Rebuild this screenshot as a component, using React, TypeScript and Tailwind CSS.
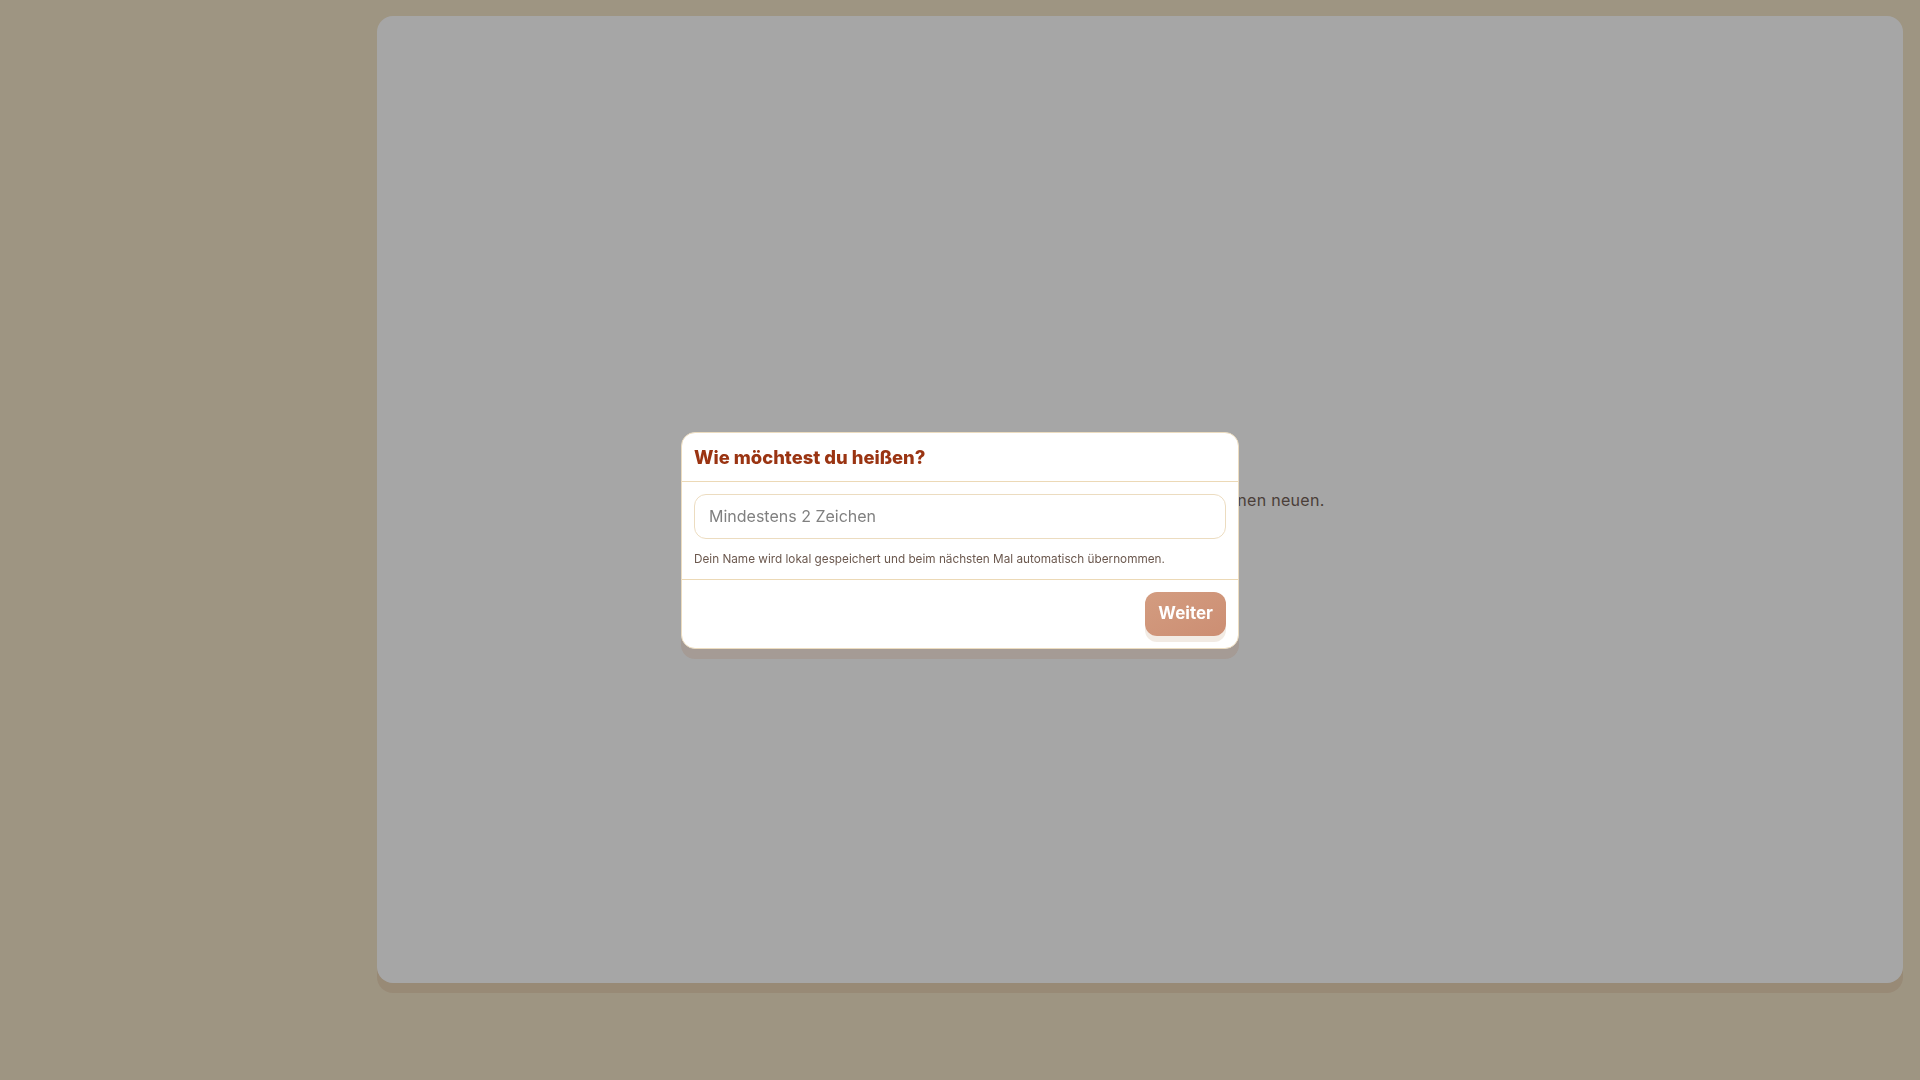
import React from "react";

export default function App() {
  return (
    <div
      className="relative w-full h-[1080px] overflow-hidden bg-[#f3e5c8] flex"
      style={{ fontFamily: "Inter, 'Noto Sans', sans-serif" }}
    >
      <aside className="w-[361px] shrink-0" />
      <main className="flex-1 pt-4 pl-4 pr-[17px]">
        <div className="h-[967px] rounded-2xl bg-white shadow-[0_10px_0_#ead4b6] flex items-center justify-center">
          <p className="text-base tracking-[0.28px] text-[#736258]">
            Tritt einem Raum bei oder erstelle einen neuen.
          </p>
        </div>
      </main>

      <div className="fixed inset-0 bg-black/35 flex items-center justify-center">
        <div className="w-[558px] rounded-[14px] bg-white border border-[#ecdcbf] shadow-[0_10px_0_rgba(153,86,46,0.15)] overflow-hidden">
          <div className="px-3 py-3 border-b border-[#ecd9b6]">
            <h2 className="text-[18.4px] leading-6 font-extrabold text-[#9a3412]">
              Wie möchtest du heißen?
            </h2>
          </div>
          <div className="p-3 flex flex-col gap-3">
            <input
              type="text"
              placeholder="Mindestens 2 Zeichen"
              className="w-full h-[45px] rounded-xl border border-[#ecdcc0] px-[14px] text-base text-[#3b2f28] placeholder:text-[#808080] outline-none bg-white"
            />
            <p className="text-[11.75px] leading-4 text-[#6b584e]">
              Dein Name wird lokal gespeichert und beim nächsten Mal automatisch übernommen.
            </p>
          </div>
          <div className="px-3 py-3 border-t border-[#ecd9b6] flex justify-end">
            <button className="h-[44px] px-[13px] rounded-xl bg-gradient-to-br from-[#d39c80] to-[#cc8e73] text-white font-bold text-[17px] shadow-[0_6px_0_#f2ebe4]">
              Weiter
            </button>
          </div>
        </div>
      </div>
    </div>
  );
}
